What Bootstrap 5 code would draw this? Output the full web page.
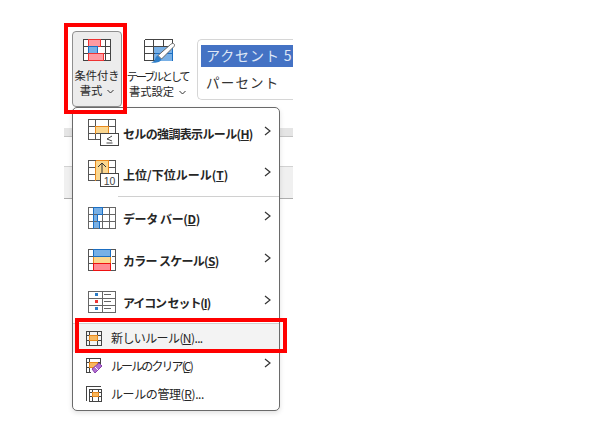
<!DOCTYPE html>
<html lang="ja"><head><meta charset="utf-8"><title>条件付き書式</title>
<link rel="stylesheet" href="https://cdn.jsdelivr.net/npm/bootstrap@5.3.0/dist/css/bootstrap.min.css">
<style>
html,body{margin:0;background:#fff}
body{font-family:"Noto Sans CJK JP","Liberation Sans",sans-serif;color:#262626;overflow:hidden}
.stage{position:relative;width:600px;height:445px;padding:31px 0 0 64px}
.ribbon{width:229px;padding-left:8px;height:76px}
.rbtn{width:50px;height:76px;background:#ececec;border:1px solid #8f8f8f;border-radius:4px;font-size:11.3px;line-height:15px;padding-top:7px;text-align:center;flex:none}
.rbtn2{width:75px;flex:none;font-size:11.3px;line-height:15px;padding-top:8px;text-align:center}
.rlabel{white-space:nowrap;margin-top:7px}
.rlabel2{margin-top:6px;letter-spacing:-2.4px;white-space:nowrap;padding-right:4px}
.rlabel2b{letter-spacing:0;white-space:nowrap;padding-right:4px}
.caret{width:7px;height:5px;margin-left:5px;vertical-align:1px}
.gallery{height:61px;margin-top:8px;flex:1;border:1px solid #d6d6d6;border-right:0;border-radius:5px 0 0 5px;padding:5px 0 0 3px;overflow:hidden;min-width:0}
.accent{background:#4472c4;color:#dfe7f6;height:22px;font-size:14px;line-height:20px;padding-left:5px;white-space:nowrap;letter-spacing:.9px}
.pct{font-size:13.5px;line-height:20px;margin-top:5px;padding-left:5px;letter-spacing:1.2px;color:#333}
.sheet{width:229px;margin-top:21px}
.band1{height:9px;background:#e5e5e5;border-bottom:1px solid #c4c4c4}
.band2{height:33px;margin-top:29px;background:#f0f0f0;border-top:1px solid #d2d2d2;border-bottom:1px solid #aeaeae}
.cf-menu{display:block;position:absolute;left:72px;top:107px;width:208px;height:304px;padding:5px 0 0;margin:0;border:1.5px solid #6a6a6a;border-radius:5px;background:#fff;box-shadow:0 2px 5px rgba(0,0,0,.12)}
.cf-item{display:flex;align-items:center;padding:0 8px 0 15px;color:#262626;font-size:12px;background:transparent;white-space:nowrap}
.cf-item:hover{color:#262626}
.tall{height:41px;font-weight:700}
.tall2{height:42px}
.short{height:28px;padding-left:13px}
.active-row{background:#f3f3f3}
.cf-icon{flex:none;margin-top:-2px}
.cf-label{margin-left:4px}
.short .cf-label{margin-left:9px}
.sp-h{letter-spacing:-.65px}
.sp-t{letter-spacing:0}
.sp-d{letter-spacing:-.4px}
.sp-s{letter-spacing:-.7px}
.sp-i{letter-spacing:-1.1px}
.sp-n{letter-spacing:-.6px}
.sp-c{letter-spacing:-1.9px}
.sp-r{letter-spacing:-.4px}
.chev{margin-left:auto;width:7px;height:10px;margin-top:-6px;flex:none}
.chev path{fill:none;stroke:#333;stroke-width:1.2}
.sep{height:1px;background:#d0d0d0;margin:1px 0 1px 45px}
.sep2{height:1px;background:#d0d0d0;margin:0}
.callout{position:absolute;border:4px solid #f00;pointer-events:none;z-index:1001}
.c1{left:64px;top:23px;width:63px;height:91px}
.c2{left:75px;top:318px;width:212px;height:35px}
</style></head><body>
<div class="stage">
  <div class="ribbon d-flex">
    <div class="rbtn">
      <svg width="28" height="22" viewBox="0 0 28 22" shape-rendering="crispEdges" class="d-block mx-auto"><path d="M.5.500h27v21H.500zM.5 7.500h27M.5 14.500h27M5.500.5v21M14.500.5v21M22.500.5v21" fill="#fff" stroke="#444"/><rect x="5.500" y=".5" width="12" height="7" fill="#ff9aa2" stroke="#e33"/><rect x="5.500" y="7.500" width="9" height="7" fill="#78b0e6" stroke="#1b6ec2"/><rect x="5.500" y="14.500" width="15" height="7" fill="#ff9aa2" stroke="#e33"/></svg>
      <div class="rlabel">条件付き<br>書式<svg class="caret" viewBox="0 0 7 5"><path d="M.5 1l3 3 3-3" fill="none" stroke="#333"/></svg></div>
    </div>
    <div class="rbtn2">
      <svg width="32" height="24" viewBox="0 0 32 24" class="d-block mx-auto"><path d="M10 7h19v15H10z" fill="#78b0e6"/><g shape-rendering="crispEdges" fill="none"><path d="M10.500 7.500h18v14M10.500 14.500h18" stroke="#1b6ec2"/><path d="M.5.500h28v7M.5.500v21h10M.5 7.500h28M.5 14.500h10M9.500.5v21M19.500.5v7" stroke="#444"/></g><path d="M29.500 4.500c1.200.8 1.300 1.800.5 3L17.500 20 14 16.500 26.500 5.500c1-.8 2-1.500 3-1z" fill="#fff" stroke="#666"/><path d="M13.500 16.500l4 4c-1 2.500-6 4-10.500 3 2-.8 3.500-1.500 4-3 .5-2 1.200-3.200 2.500-4z" fill="#2f7fc9"/></svg>
      <div class="rlabel2">テーブルとして</div>
      <div class="rlabel2b">書式設定<svg class="caret" viewBox="0 0 7 5"><path d="M.5 1l3 3 3-3" fill="none" stroke="#333"/></svg></div>
    </div>
    <div class="gallery">
      <div class="accent">アクセント 5</div>
      <div class="pct">パーセント</div>
    </div>
  </div>
  <div class="sheet"><div class="band1"></div><div class="band2"></div></div>

  <div class="dropdown-menu cf-menu">
    <a class="dropdown-item cf-item tall" href="#"><svg class="cf-icon" width="31" height="28" viewBox="0 0 31 28"><g shape-rendering="crispEdges"><path d="M7 7h13v7H7z" fill="#fbd78f"/><path d="M.5.500h27v20H.500zM.5 7.500h27M.5 14.500h27M7.500.5v20M20.500.5v20" fill="none" stroke="#555"/><path d="M7.500 14.500v-7h13v7" fill="none" stroke="#e8891c"/><rect x="12.500" y="14.500" width="18" height="12" fill="#fff" stroke="#444"/></g><path d="M24 17l-5 3 5 2M18.500 24h6" fill="none" stroke="#444"/></svg><span class="cf-label sp-h">セルの強調表示ルール(<u>H</u>)</span><svg class="chev" viewBox="0 0 7 10"><path d="M1 1l5 4-5 4"/></svg></a>
    <a class="dropdown-item cf-item tall" href="#"><svg class="cf-icon" width="31" height="28" viewBox="0 0 31 28"><g shape-rendering="crispEdges"><path d="M7 0h13v21H7z" fill="#fbd78f"/><path d="M.5.500h27v20H.500zM.5 7.500h7M.5 14.500h7M20.500 7.500h7M20.500 14.500h7" fill="none" stroke="#555"/><path d="M7.500.5v20M20.500.5v20M7.500.5h13" fill="none" stroke="#e8891c"/><rect x="12.500" y="13.500" width="18" height="13" fill="#fff" stroke="#444"/></g><path d="M10 7l4-4 4 4M14 3v10" fill="none" stroke="#333"/><text x="21.500" y="24.500" text-anchor="middle" font-size="10.500" fill="#444" font-family="Liberation Sans" font-weight="400" letter-spacing="0">10</text></svg><span class="cf-label sp-t">上位/下位ルール(<u>T</u>)</span><svg class="chev" viewBox="0 0 7 10"><path d="M1 1l5 4-5 4"/></svg></a>
    <div class="sep"></div>
    <a class="dropdown-item cf-item tall tall2" href="#"><svg class="cf-icon" width="31" height="22" viewBox="0 0 31 22" shape-rendering="crispEdges"><path d="M5 0h9v7H5zM5 7h4v7H5zM5 14h6v7H5z" fill="#78b0e6"/><path d="M.5.500h27v21H.500zM.5 7.500h27M.5 14.500h27M14.500.5v21M21.500.5v21" fill="none" stroke="#666"/><path d="M5.500 21.500V.5h9v7h-5v7h2v7" fill="none" stroke="#1b6ec2"/></svg><span class="cf-label sp-d">データ バー(<u>D</u>)</span><svg class="chev" viewBox="0 0 7 10"><path d="M1 1l5 4-5 4"/></svg></a>
    <a class="dropdown-item cf-item tall tall2" href="#"><svg class="cf-icon" width="31" height="22" viewBox="0 0 31 22" shape-rendering="crispEdges"><path d="M5 0h18v7H5z" fill="#78b0e6"/><path d="M5 7h18v7H5z" fill="#fbd78f"/><path d="M5 14h18v7H5z" fill="#ff8a92"/><path d="M.5.500h27v21H.500zM.5 7.500h5M.5 14.500h5M23.500 7.500h4M23.500 14.500h4" fill="none" stroke="#555"/><path d="M5.500 7.500V.5h17v7z" fill="none" stroke="#1b6ec2"/><path d="M5.500 7.500v7M22.500 7.500v7" fill="none" stroke="#e8891c"/><path d="M5.500 14.500h17v7h-17z" fill="none" stroke="#e11"/></svg><span class="cf-label sp-s">カラー スケール(<u>S</u>)</span><svg class="chev" viewBox="0 0 7 10"><path d="M1 1l5 4-5 4"/></svg></a>
    <a class="dropdown-item cf-item tall" href="#"><svg class="cf-icon" width="31" height="22" viewBox="0 0 31 22" shape-rendering="crispEdges"><path d="M.5.500h27v21H.500zM.5 7.500h27M.5 14.500h27M14.500.5v21" fill="none" stroke="#666"/><rect x="7" y="2" width="3" height="3" fill="#2a7cc7"/><rect x="7" y="9" width="3" height="3" fill="#e33"/><rect x="7" y="16" width="3" height="3" fill="#2a7cc7"/><path d="M16 3.500h7M16 10.500h7M16 17.500h7" stroke="#666" fill="none"/></svg><span class="cf-label sp-i">アイコン セット(<u>I</u>)</span><svg class="chev" viewBox="0 0 7 10"><path d="M1 1l5 4-5 4"/></svg></a>
    <div class="sep2"></div>
    <a class="dropdown-item cf-item short active-row" href="#"><svg width="16" height="15" viewBox="0 0 16 15" shape-rendering="crispEdges" class="flex-none"><path d="M.5.500h15v14H.500zM.5 4.500h15M.5 9.500h15M3.500.5v14M11.500.5v14" fill="none" stroke="#444"/><rect x="3.500" y="4.500" width="8" height="5" fill="#f8b85f" stroke="#e8891c"/></svg><span class="cf-label sp-n">新しいルール(<u>N</u>)...</span></a>
    <a class="dropdown-item cf-item short" href="#"><svg width="18" height="16" viewBox="0 0 18 16" class="flex-none"><g shape-rendering="crispEdges"><path d="M.5 14.500V.5h14v6M.5 4.500h14M.5 9.500h6M3.500.5v14M.5 14.500h4" fill="none" stroke="#444"/><rect x="3.500" y="4.500" width="8" height="5" fill="#f8b85f" stroke="#e8891c"/></g><path d="M6 11l7-6 3 3-7 7z" fill="#b06fce" stroke="#8a3fb0"/><path d="M9 9l3 3" stroke="#fff"/></svg><span class="cf-label sp-c" style="margin-left:7px">ルールのクリア(<u>C</u>)</span><svg class="chev" viewBox="0 0 7 10"><path d="M1 1l5 4-5 4"/></svg></a>
    <a class="dropdown-item cf-item short" href="#"><svg width="16" height="16" viewBox="0 0 16 16" shape-rendering="crispEdges" class="flex-none"><path d="M.5 15V.5H15M3.500 15.500V3.500h12v12zM3.500 6.500h12M3.500 10.500h12M6.500 3.500v12M12.500 3.500v12" fill="none" stroke="#444"/><rect x="6.500" y="6.500" width="6" height="4" fill="#f8b85f" stroke="#e8891c"/></svg><span class="cf-label sp-r">ルールの管理(<u>R</u>)...</span></a>
  </div>
  <div class="callout c1"></div>
  <div class="callout c2"></div>
</div>
<script src="https://cdn.jsdelivr.net/npm/bootstrap@5.3.0/dist/js/bootstrap.bundle.min.js"></script>
</body></html>
